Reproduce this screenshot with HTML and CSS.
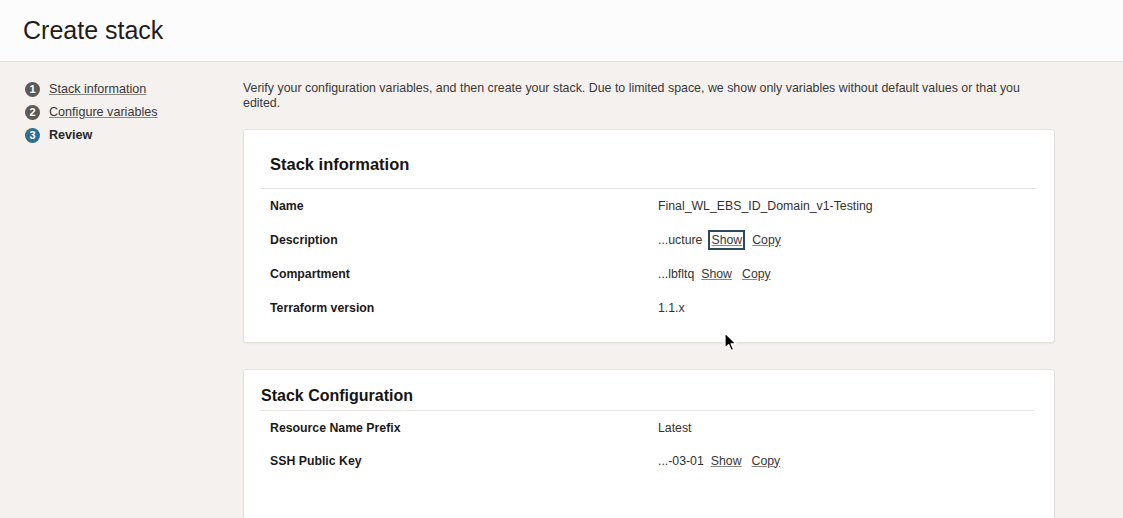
FILE: index.html
```html
<!DOCTYPE html>
<html>
<head>
<meta charset="utf-8">
<link rel="stylesheet" href="styles.css">
</head>
<body>
<header class="page-header">
  <h1 class="page-title">Create stack</h1>
</header>
<div class="layout">
  <nav class="steps">
    <div class="step">
      <span class="step-num done">1</span>
      <a class="step-link" href="#">Stack information</a>
    </div>
    <div class="step">
      <span class="step-num done">2</span>
      <a class="step-link" href="#">Configure variables</a>
    </div>
    <div class="step">
      <span class="step-num current">3</span>
      <span class="step-current">Review</span>
    </div>
  </nav>
  <main class="main">
    <p class="intro">Verify your configuration variables, and then create your stack. Due to limited space, we show only variables without default values or that you edited.</p>

    <section class="card">
      <h2 class="card-title">Stack information</h2>
      <div class="row">
        <div class="label">Name</div>
        <div class="value">Final_WL_EBS_ID_Domain_v1-Testing</div>
      </div>
      <div class="row">
        <div class="label">Description</div>
        <div class="value"><span>...ucture</span><a class="act focused" href="#">Show</a><a class="act" href="#">Copy</a></div>
      </div>
      <div class="row">
        <div class="label">Compartment</div>
        <div class="value"><span>...lbfltq</span><a class="act" href="#">Show</a><a class="act" href="#">Copy</a></div>
      </div>
      <div class="row">
        <div class="label">Terraform version</div>
        <div class="value">1.1.x</div>
      </div>
    </section>

    <section class="card card-config">
      <h2 class="card-title config-title">Stack Configuration</h2>
      <div class="row row-tight">
        <div class="label">Resource Name Prefix</div>
        <div class="value">Latest</div>
      </div>
      <div class="row row-tight">
        <div class="label">SSH Public Key</div>
        <div class="value"><span>...-03-01</span><a class="act" href="#">Show</a><a class="act" href="#">Copy</a></div>
      </div>
    </section>
  </main>
</div>
<svg class="cursor" width="14" height="20" viewBox="0 0 14 20">
  <path d="M1 1 L1 16 L4.6 12.6 L7.2 18.6 L9.6 17.6 L7.1 11.8 L12 11.8 Z" fill="#000" stroke="#fff" stroke-width="1.2" stroke-linejoin="round"/>
</svg>
</body>
</html>
```
FILE: styles.css
```css
* { box-sizing: border-box; }
html, body { margin: 0; padding: 0; }
body {
  width: 1123px;
  height: 518px;
  overflow: hidden;
  background: #f4f1ef;
  font-family: "Liberation Sans", Arial, sans-serif;
  color: #2f2d2b;
  position: relative;
}
.page-header {
  height: 62px;
  background: #fdfcfc;
  border-bottom: 1px solid #e2dfdc;
  padding: 15px 23px 0;
}
.page-title {
  margin: 0;
  font-size: 25px;
  font-weight: normal;
  color: #1f1d1b;
  line-height: 30px;
}
.layout {
  display: flex;
}
.steps {
  width: 243px;
  padding: 20px 0 0 25px;
  display: flex;
  flex-direction: column;
  gap: 9px;
}
.step {
  display: flex;
  align-items: center;
  gap: 9px;
  height: 14px;
}
.step-num {
  width: 15px;
  height: 15px;
  border-radius: 50%;
  color: #fff;
  font-size: 11px;
  font-weight: bold;
  display: flex;
  align-items: center;
  justify-content: center;
  flex: none;
}
.step-num.done { background: #5d5955; }
.step-num.current { background: #2f6e92; }
.step-link {
  font-size: 12.6px;
  color: #3a3734;
  text-decoration: underline;
  text-decoration-color: #8a8682;
}
.step-current {
  font-size: 12.6px;
  font-weight: bold;
  color: #2a2826;
}
.main {
  width: 812px;
  padding-top: 19px;
}
.intro {
  margin: 0 0 18px;
  font-size: 12.4px;
  line-height: 15px;
  color: #3b3936;
}
.card {
  background: #fff;
  border: 1px solid #e3e0dd;
  border-radius: 3px;
  padding: 17px 17px 17px;
  box-shadow: 0 1px 2px rgba(0,0,0,0.04);
}
.card-title {
  margin: 0;
  padding: 7px 9px 14px;
  font-size: 16.5px;
  line-height: 20px;
  font-weight: bold;
  color: #161513;
  border-bottom: 1px solid #e6e3e1;
}
.row {
  display: grid;
  grid-template-columns: 388px 1fr;
  padding-left: 9px;
  height: 34px;
  align-items: center;
  font-size: 12.3px;
}
.label {
  font-weight: bold;
  color: #1c1a18;
}
.value {
  color: #333130;
  display: flex;
  align-items: center;
  gap: 4px;
}
.act {
  color: #3a3734;
  text-decoration: underline;
  text-decoration-color: #8a8682;
  border: 2px solid transparent;
  padding: 1px 1px;
  line-height: 14px;
}
.act.focused {
  border-color: #2d4a59;
  margin-left: 2px;
}
.card-config {
  margin-top: 26px;
  min-height: 200px;
  padding-top: 17px;
}
.config-title {
  font-size: 16px;
  line-height: 18px;
  padding: 0 0 5px;
  margin-right: 3px;
}
.row-tight { height: 33px; }
.cursor {
  position: absolute;
  left: 724px;
  top: 332px;
}
```
